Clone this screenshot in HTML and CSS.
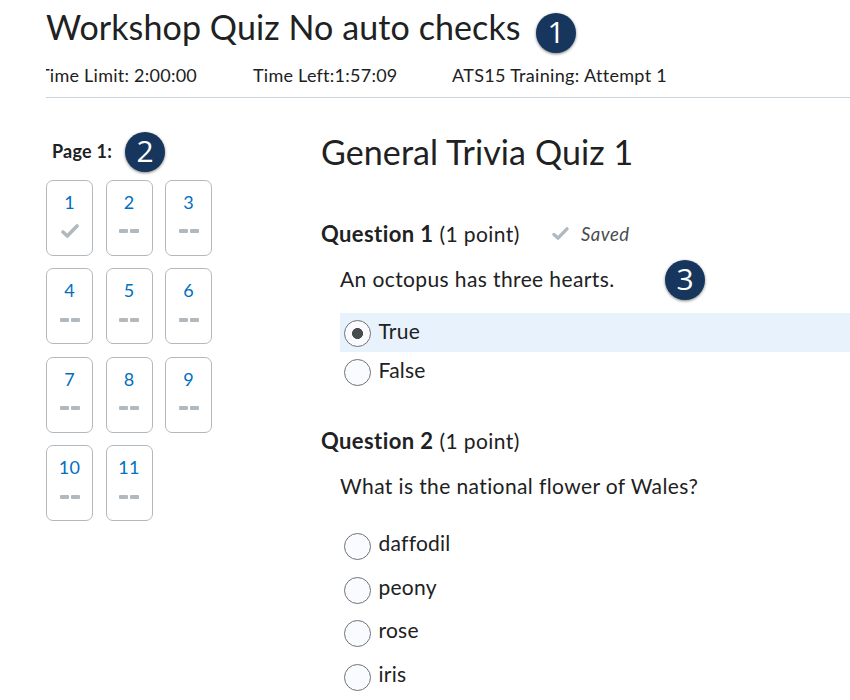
FILE: index.html
```html
<!DOCTYPE html>
<html lang="en">
<head>
  <meta charset="UTF-8" />
  <meta name="viewport" content="width=device-width, initial-scale=1.0" />
  <title>Workshop Quiz No auto checks</title>
  <link rel="stylesheet" href="styles.css">
</head>
<body>
  <header class="quiz-header">
    <div class="title-row">
      <h1>Workshop Quiz No auto checks</h1>
      <span class="badge">1</span>
    </div>
    <div class="info">
      <span class="limit">Time Limit: 2:00:00</span>
      <span class="left">Time Left:1:57:09</span>
      <span class="attempt">ATS15 Training: Attempt 1</span>
    </div>
  </header>

  <div class="main">
    <nav class="sidebar">
      <div class="page-row">
        <strong>Page 1:</strong>
        <span class="badge">2</span>
      </div>
      <div class="grid">
        <a class="cell"><span>1</span><svg class="check" viewBox="0 0 18 14"><path d="M2 8 L6.3 12 L16 2" /></svg></a>
        <a class="cell"><span>2</span><i class="dashes"></i></a>
        <a class="cell"><span>3</span><i class="dashes"></i></a>
        <a class="cell"><span>4</span><i class="dashes"></i></a>
        <a class="cell"><span>5</span><i class="dashes"></i></a>
        <a class="cell"><span>6</span><i class="dashes"></i></a>
        <a class="cell"><span>7</span><i class="dashes"></i></a>
        <a class="cell"><span>8</span><i class="dashes"></i></a>
        <a class="cell"><span>9</span><i class="dashes"></i></a>
        <a class="cell"><span>10</span><i class="dashes"></i></a>
        <a class="cell"><span>11</span><i class="dashes"></i></a>
      </div>
    </nav>

    <form class="content">
      <h2>General Trivia Quiz 1</h2>

      <section class="question">
        <div class="question-head">
          <h3>Question 1</h3>
          <span class="points">(1 point)</span>
          <svg class="check saved-check" viewBox="0 0 18 14"><path d="M2 8 L6.3 12 L16 2" /></svg>
          <em>Saved</em>
        </div>
        <div class="question-text">
          <p>An octopus has three hearts.</p>
          <span class="badge">3</span>
        </div>
        <div class="answers">
          <label class="selected"><input type="radio" name="q1" checked /><span>True</span></label>
          <label><input type="radio" name="q1" /><span>False</span></label>
        </div>
      </section>

      <section class="question">
        <div class="question-head">
          <h3>Question 2</h3>
          <span class="points">(1 point)</span>
        </div>
        <div class="question-text">
          <p>What is the national flower of Wales?</p>
        </div>
        <div class="answers spaced">
          <label><input type="radio" name="q2" /><span>daffodil</span></label>
          <label><input type="radio" name="q2" /><span>peony</span></label>
          <label><input type="radio" name="q2" /><span>rose</span></label>
          <label><input type="radio" name="q2" /><span>iris</span></label>
        </div>
      </section>
    </form>
  </div>
</body>
</html>
```
FILE: styles.css
```css
* {
  box-sizing: border-box;
}

body {
  margin: 0;
  height: 700px;
  overflow: hidden;
  background-color: #ffffff;
  color: #202122;
  font-family: Lato, sans-serif;
  font-size: 21px;
  letter-spacing: 0.25px;
}

h1, h2, h3, p {
  margin: 0;
  font-weight: normal;
}

.quiz-header {
  margin-left: 46px;
  height: 98px;
  border-bottom: 1px solid #cdd5dc;
  overflow: hidden;
}

.title-row {
  display: flex;
  height: 54px;
}

h1 {
  width: 490px;
  font-size: 34px;
  line-height: 54px;
  letter-spacing: 0.1px;
  white-space: nowrap;
}

.badge {
  flex: none;
  width: 40px;
  height: 40px;
  border-radius: 50%;
  background-color: #17365d;
  box-shadow: 0 1px 3px rgba(0, 0, 0, 0.5);
  color: #ffffff;
  font-family: "Open Sans", sans-serif;
  font-size: 30px;
  line-height: 38px;
  letter-spacing: 0;
  text-align: center;
}

.title-row .badge {
  margin-top: 13px;
}

.info {
  display: flex;
  margin-left: -7px;
  font-size: 18px;
  line-height: 43px;
  white-space: nowrap;
  clip-path: inset(0 0 0 7px);
}

.limit {
  width: 214px;
}

.left {
  width: 199px;
}

.attempt {
  letter-spacing: 0.32px;
}

.main {
  display: flex;
  padding-left: 46px;
}

.sidebar {
  width: 275px;
  padding-top: 34px;
}

.page-row {
  display: flex;
  height: 48px;
  padding-left: 6px;
  font-size: 18px;
  line-height: 39px;
}

.page-row strong {
  width: 73px;
}

.grid {
  display: grid;
  grid-template-columns: repeat(3, 47px);
  grid-auto-rows: 76px;
  gap: 12.4px 12.5px;
}

.cell {
  display: flex;
  flex-direction: column;
  align-items: center;
  padding-top: 10px;
  border: 1px solid #b1b9be;
  border-radius: 7px;
  color: #006fbf;
  font-size: 18px;
  line-height: 22px;
}

.check {
  width: 18px;
  height: 14px;
  margin-top: 11px;
  fill: none;
  stroke: #b1b9be;
  stroke-width: 3.6;
  stroke-linecap: round;
  stroke-linejoin: round;
}

.dashes {
  display: flex;
  gap: 2px;
  margin-top: 16.4px;
}

.dashes::before,
.dashes::after {
  content: "";
  width: 9px;
  height: 4px;
  border-radius: 1px;
  background-color: #b1b9be;
}

.content {
  flex: 1;
}

h2 {
  padding-top: 26px;
  font-size: 34px;
  line-height: 56px;
  letter-spacing: 0.1px;
}

.question-head {
  display: flex;
  height: 44px;
  line-height: 44px;
}

.question-head h3 {
  width: 118.5px;
  font-size: 22px;
  font-weight: bold;
  letter-spacing: 0.4px;
}

.points {
  width: 112.5px;
  letter-spacing: 0.4px;
}

.question-head .saved-check {
  width: 17px;
  height: 13px;
  margin: 15px 12px 0 0;
}

em {
  color: #494c4e;
  font-size: 18.5px;
  letter-spacing: 0.5px;
}

.question {
  padding-top: 32px;
  height: 207px;
}

.question-text {
  display: flex;
  height: 57px;
  padding-left: 19px;
  line-height: 45px;
}

.question-text p {
  width: 325px;
  letter-spacing: 0.39px;
  white-space: nowrap;
}

.question-text .badge {
  margin-top: 4px;
}

.answers {
  margin-left: 19px;
}

.answers label {
  display: flex;
  height: 39px;
  padding-left: 4px;
  line-height: 36px;
}

.answers .selected {
  background-color: #e8f2fd;
}

.answers.spaced {
  padding-top: 6px;
}

.answers.spaced label {
  height: 43.7px;
  line-height: 34px;
}

input[type="radio"] {
  appearance: none;
  width: 27px;
  height: 27px;
  margin: 7px 7.5px 0 0;
  border: 1px solid #6e7376;
  border-radius: 50%;
  background-color: #f9fbff;
}

input[type="radio"]:checked {
  background-image: radial-gradient(circle, #494c4e 5.2px, transparent 5.8px);
}
```
